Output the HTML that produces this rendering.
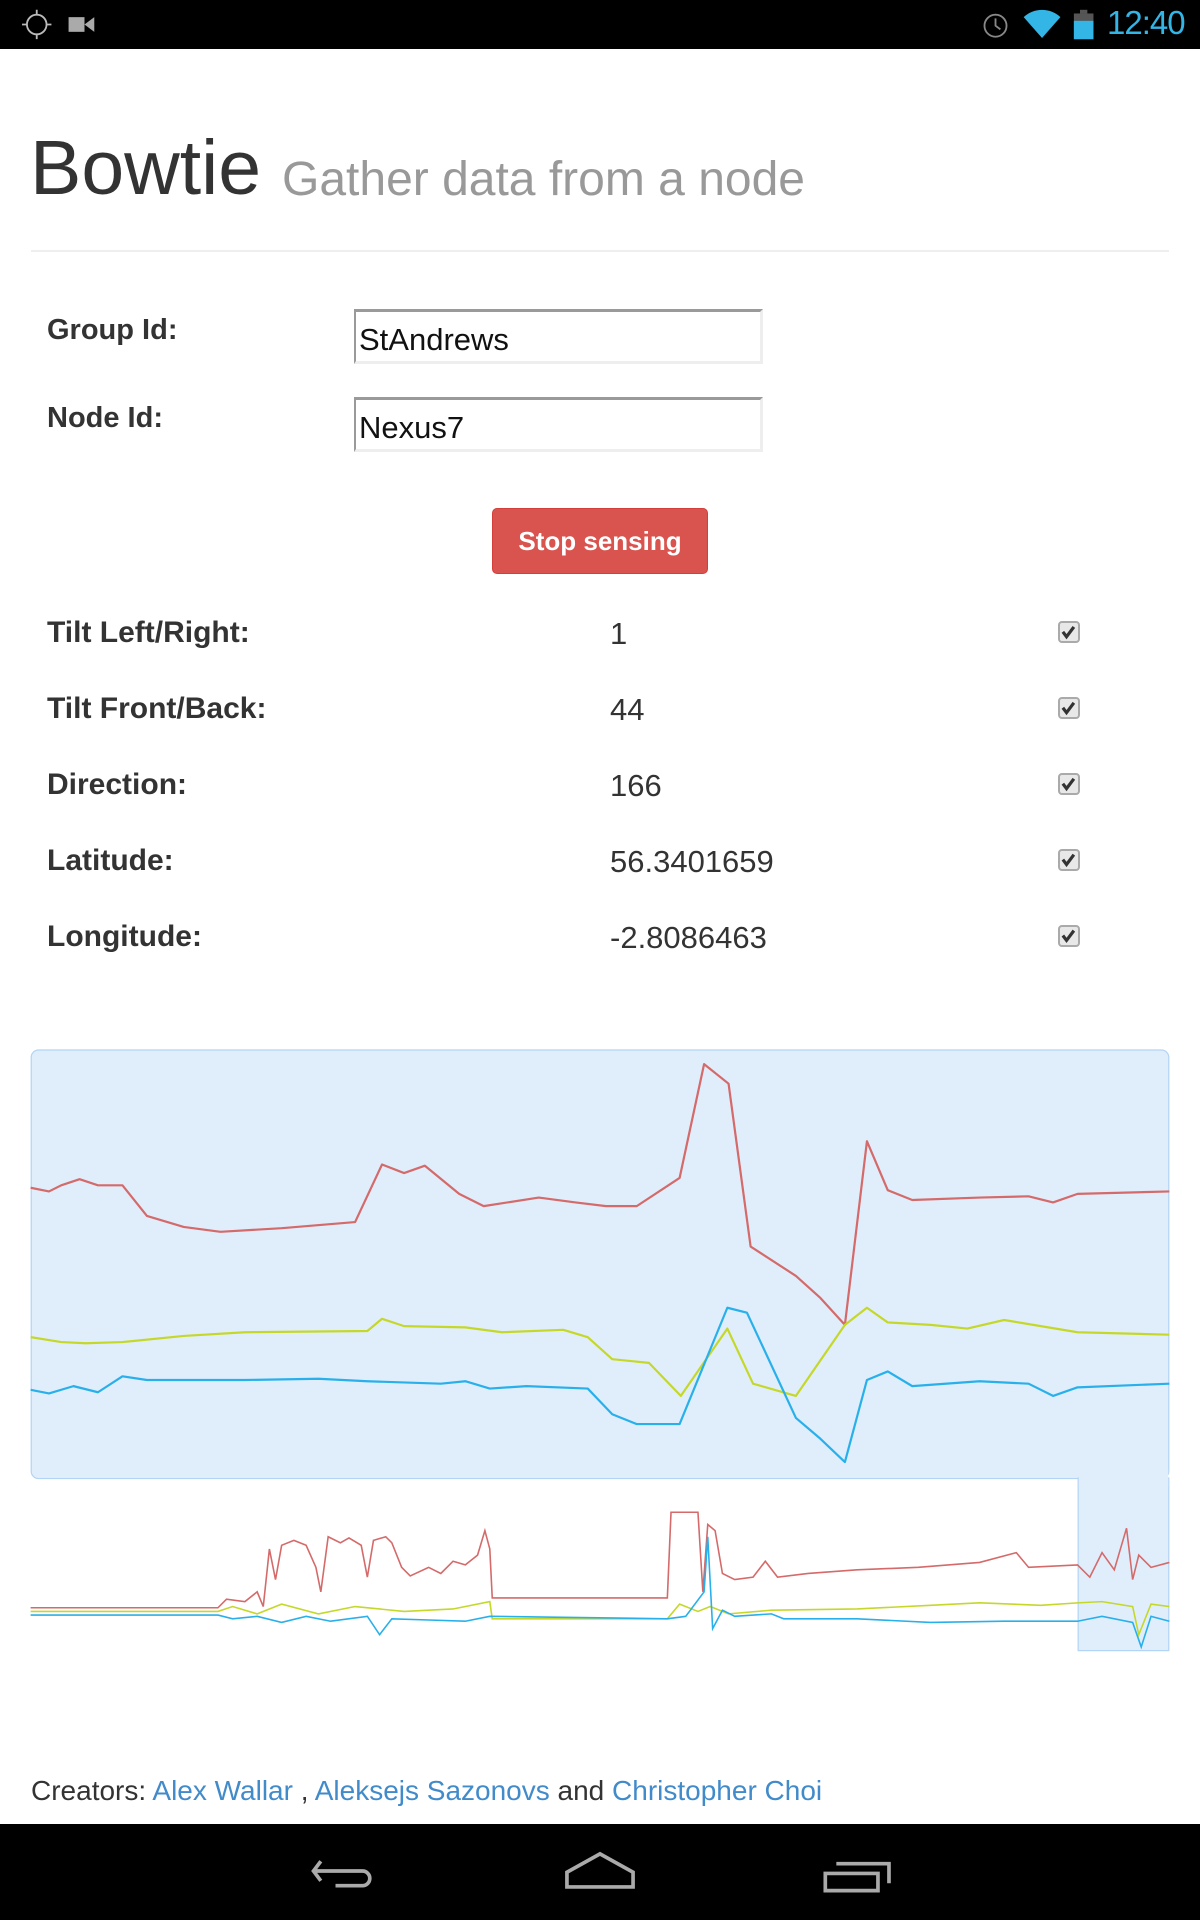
<!DOCTYPE html>
<html><head><meta charset="utf-8"><style>
html,body{margin:0;padding:0;width:1200px;height:1920px;background:#fff;overflow:hidden;font-family:"Liberation Sans",sans-serif;position:relative}
.a{position:absolute;white-space:nowrap}
.lbl{font-weight:bold;color:#333;font-size:30px}
.val{color:#333;font-size:31px}
.inp{position:absolute;left:354px;width:409px;height:55px;box-sizing:border-box;border:3px solid #eee;border-top-color:#9a9a9a;border-left-color:#9a9a9a;border-left-width:2px;font-size:31px;color:#111;padding:10px 0 0 3px}
.cb{position:absolute;left:1058px;width:22px;height:22px;border:2px solid #aaa;border-radius:4px;background:#e8e8e8;box-sizing:border-box}
a{color:#428bca;text-decoration:none}
</style></head><body>
<div class="a" style="left:0;top:0;width:1200px;height:49px;background:#000"></div>
<div class="a" style="left:0;top:1824px;width:1200px;height:96px;background:#000"></div>
<div class="a" style="left:1107px;top:4px;font-size:33px;color:#33b5e5;letter-spacing:-1px">12:40</div>

<div class="a" style="left:30px;top:124px;font-size:77px;color:#333">Bowtie</div>
<div class="a" style="left:282px;top:152px;font-size:48px;color:#999">Gather data from a node</div>
<div class="a" style="left:31px;top:250px;width:1138px;height:2px;background:#eee"></div>

<div class="a lbl" style="left:47px;top:314px;font-size:29px">Group Id:</div>
<div class="inp" style="top:309px">StAndrews</div>
<div class="a lbl" style="left:47px;top:402px;font-size:29px">Node Id:</div>
<div class="inp" style="top:397px">Nexus7</div>

<div class="a" style="left:492px;top:508px;width:216px;height:66px;background:#d9534f;border:1px solid #d43f3a;border-radius:5px;box-sizing:border-box;color:#fff;font-weight:bold;font-size:26px;text-align:center;line-height:64px">Stop sensing</div>

<div class="a lbl" style="left:47px;top:616px">Tilt Left/Right:</div>
<div class="a val" style="left:610px;top:616px">1</div>
<div class="cb" style="top:621px"></div>
<div class="a lbl" style="left:47px;top:692px">Tilt Front/Back:</div>
<div class="a val" style="left:610px;top:692px">44</div>
<div class="cb" style="top:697px"></div>
<div class="a lbl" style="left:47px;top:768px">Direction:</div>
<div class="a val" style="left:610px;top:768px">166</div>
<div class="cb" style="top:773px"></div>
<div class="a lbl" style="left:47px;top:844px">Latitude:</div>
<div class="a val" style="left:610px;top:844px">56.3401659</div>
<div class="cb" style="top:849px"></div>
<div class="a lbl" style="left:47px;top:920px">Longitude:</div>
<div class="a val" style="left:610px;top:920px">-2.8086463</div>
<div class="cb" style="top:925px"></div>

<div class="a" style="left:31px;top:1775px;font-size:28px;color:#333">Creators: <a>Alex Wallar</a> , <a>Aleksejs Sazonovs</a> and <a>Christopher Choi</a></div>

<svg class="a" style="left:0;top:0" width="1200" height="1920" viewBox="0 0 980 1568">
<g fill="none" stroke="#333" stroke-width="2.6">
<path d="M868 516l3 4 6-8"/><path d="M868 578l3 4 6-8"/><path d="M868 640l3 4 6-8"/><path d="M868 702l3 4 6-8"/><path d="M868 764l3 4 6-8"/>
</g>
<g fill="none" stroke="#bbb" stroke-width="1.5">
<circle cx="30" cy="20" r="8"/><path d="M30 8v4M30 28v4M18 20h4M38 20h4"/>
<circle cx="813" cy="21" r="9" stroke="#888"/><path d="M813 15v6l4 3" stroke="#888"/>
</g>
<rect x="56" y="14" width="13" height="12" fill="#aaa"/><path d="M69 20l8-6v12z" fill="#aaa"/>
<path d="M836 14a22 22 0 0 1 30 0l-15 17z" fill="#33b5e5"/>
<rect x="877" y="11" width="16" height="21" fill="#555"/><rect x="877" y="17" width="16" height="15" fill="#33b5e5"/><rect x="882" y="8" width="6" height="3" fill="#555"/>
<g fill="none" stroke="#aaa" stroke-width="3">
<path d="M262 1520l-6 8 6 8M256 1528h40a6 6 0 0 1 0 12h-22"/>
<path d="M463 1529l27-15 27 15v12h-54z"/>
<path d="M674 1530h43v14h-43zM683 1522h43v16"/>
</g>
<rect x="25.5" y="857.5" width="929" height="350" rx="6" fill="#e0eefc" stroke="#b3d4f5"/>
<rect x="880.5" y="1207" width="74" height="141" fill="#e0eefc" stroke="#b3d4f5"/>
<rect x="881" y="1200" width="73" height="14" fill="#e0eefc"/>
<g fill="none" stroke-width="1.8" stroke-linejoin="round">
<polyline stroke="#d46a6a" points="25,970 40,973 50,968 65,963 80,968 100,968 120,993 150,1002 180,1006 230,1003 290,998 312,951 330,958 347,952 375,975 395,985 440,978 470,982 495,985 520,985 555,962 575,869 595,885 613,1018 650,1042 670,1060 690,1082 708,932 725,972 745,980 800,978 840,977 860,982 880,975 955,973"/>
<polyline stroke="#c5d82a" points="25,1092 50,1096 70,1097 100,1096 150,1091 200,1088 300,1087 312,1077 330,1083 380,1084 410,1088 460,1086 480,1092 500,1110 530,1113 556,1140 594,1085 615,1130 650,1140 690,1082 708,1068 725,1080 760,1082 790,1085 820,1078 850,1083 880,1088 955,1090"/>
<polyline stroke="#29b0ea" points="25,1135 40,1138 60,1132 80,1137 100,1124 120,1127 200,1127 260,1126 300,1128 360,1130 380,1128 400,1134 430,1132 480,1134 500,1155 520,1163 555,1163 594,1068 610,1072 650,1158 670,1175 690,1194 708,1127 725,1120 745,1132 800,1128 840,1130 860,1140 880,1133 955,1130"/>
</g>
<g fill="none" stroke-width="1.3">
<polyline stroke="#d46a6a" points="25,1313 178,1313 185,1306 200,1308 210,1300 215,1312 220,1265 225,1290 230,1262 240,1258 250,1262 258,1280 262,1300 268,1255 278,1260 285,1256 295,1262 300,1288 305,1258 315,1255 320,1260 328,1280 335,1287 350,1280 360,1285 370,1275 380,1278 390,1270 396,1250 400,1265 402,1305 545,1305 548,1235 570,1235 574,1300 578,1245 584,1250 590,1285 600,1290 615,1288 625,1275 635,1288 660,1285 700,1282 750,1280 800,1276 830,1268 840,1280 880,1278 890,1288 900,1268 910,1282 920,1248 925,1290 930,1270 940,1280 955,1276"/>
<polyline stroke="#c5d82a" points="25,1316 178,1316 190,1312 210,1318 230,1310 260,1318 290,1312 330,1316 370,1314 400,1308 402,1322 545,1322 555,1310 570,1316 580,1312 595,1318 630,1315 700,1314 760,1311 800,1309 850,1311 880,1309 900,1308 925,1312 930,1335 940,1310 955,1312"/>
<polyline stroke="#29b0ea" points="25,1319 178,1319 190,1322 210,1320 230,1325 250,1320 270,1324 300,1320 310,1335 320,1322 350,1323 380,1324 400,1320 545,1322 560,1320 575,1300 578,1255 582,1330 590,1315 600,1320 630,1318 640,1322 700,1322 760,1325 820,1324 880,1324 900,1320 925,1325 932,1345 940,1320 955,1324"/>
</g>
</svg>
</body></html>
